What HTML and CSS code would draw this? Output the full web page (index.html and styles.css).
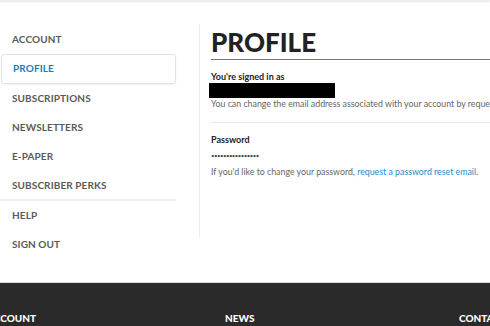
FILE: index.html
```html
<!DOCTYPE html>
<html lang="en">
<head>
<meta charset="utf-8">
<title>Profile</title>
<link rel="stylesheet" href="styles.css">
</head>
<body>
<div class="topbar"></div>
<div class="page">
  <nav class="sidebar">
    <a class="nav-item">ACCOUNT</a>
    <a class="nav-item active">PROFILE</a>
    <a class="nav-item">SUBSCRIPTIONS</a>
    <a class="nav-item">NEWSLETTERS</a>
    <a class="nav-item">E-PAPER</a>
    <a class="nav-item sep">SUBSCRIBER PERKS</a>
    <a class="nav-item">HELP</a>
    <a class="nav-item">SIGN OUT</a>
  </nav>
  <main class="main">
    <h1 class="title">PROFILE</h1>
    <section class="block first">
      <div class="label">You're signed in as</div>
      <div class="redacted"></div>
      <p class="note">You can change the email address associated with your account by requesting a change from customer service.</p>
    </section>
    <section class="block second">
      <div class="label">Password</div>
      <div class="dots">••••••••••••••••</div>
      <p class="note spaced">If you'd like to change your password, <a class="link">request a password reset email</a>.</p>
    </section>
  </main>
</div>
<footer class="footer">
  <div class="fcol">ACCOUNT</div>
  <div class="fcol">NEWS</div>
  <div class="fcol">CONTACT</div>
</footer>
</body>
</html>
```
FILE: styles.css
```css
html, body {
  margin: 0;
  padding: 0;
  background: #fff;
  overflow: hidden;
  width: 490px;
  height: 326px;
}
body {
  font-family: "Lato", "Noto Sans", sans-serif;
  color: #333;
}
.topbar {
  height: 2px;
  background: #efefef;
  box-shadow: 0 1px 2px rgba(0,0,0,0.04);
}
.page {
  display: flex;
  padding-top: 22px;
  height: 259px;
  box-sizing: border-box;
  width: 700px;
}
.sidebar {
  width: 176px;
  display: flex;
  flex-direction: column;
  padding-top: 1px;
}
.nav-item {
  display: block;
  height: 29.3px;
  line-height: 29px;
  padding-left: 12px;
  font-size: 10px;
  font-weight: 700;
  color: #5a5a5a;
  letter-spacing: 0.1px;
  box-sizing: border-box;
}
.nav-item.active {
  color: #1a7db8;
  border: 1px solid #e2e2e2;
  border-radius: 3px;
  margin-left: 1px;
  padding-left: 11px;
  line-height: 27px;
  box-shadow: 0 1px 2px rgba(0,0,0,0.06);
}
.nav-item.sep {
  border-bottom: 2px solid #f0f0f0;
}
.main {
  margin-left: 23px;
  border-left: 1px solid #ececec;
  padding-left: 11px;
  width: 450px;
  height: 213px;
}
.title {
  margin: 0;
  font-family: "Lato", sans-serif;
  font-weight: 900;
  font-size: 26px;
  line-height: 32px;
  color: #222;
  padding-top: 2px;
  border-bottom: 1px solid #777;
  padding-bottom: 1px;
}
.block {
  padding-top: 11px;
}
.block.first {
  border-bottom: 1px solid #e8e8e8;
  padding-bottom: 12px;
}
.block.second {
  padding-top: 11px;
}
.label {
  font-size: 9px;
  font-weight: 700;
  color: #222;
  line-height: 12px;
}
.redacted {
  width: 126px;
  height: 15px;
  background: #000;
  margin-left: -2px;
  margin-top: 0;
}
.note {
  margin: 0;
  font-size: 8.8px;
  line-height: 12px;
  color: #666;
  white-space: nowrap;
}
.note.spaced {
  margin-top: 4px;
}
.dots {
  font-size: 6px;
  line-height: 12px;
  color: #444;
  letter-spacing: -0.5px;
  margin-top: 4px;
}
.link {
  color: #1e8cc8;
}
.footer {
  margin-top: 21px;
  border-top: 1px solid #ddd;
  background: #2a2a2a;
  height: 44px;
  display: flex;
  align-items: flex-end;
  padding-bottom: 2px;
  box-sizing: border-box;
  margin-left: -13px;
  width: 720px;
}
.fcol {
  flex: none;
  color: #fff;
  font-weight: 900;
  font-size: 10px;
  width: 234px;
  line-height: 12px;
}
.fcol:first-child { width: 238px; }
```
